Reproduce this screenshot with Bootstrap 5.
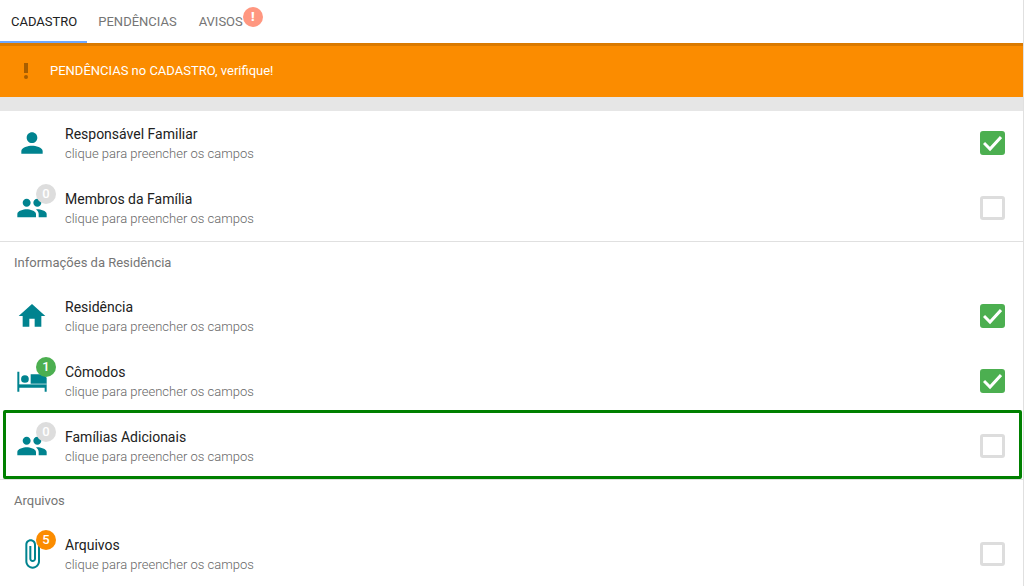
<!DOCTYPE html>
<html lang="pt-BR">
<head>
<meta charset="utf-8">
<meta name="viewport" content="width=device-width, initial-scale=1">
<title>Cadastro</title>
<link href="https://cdn.jsdelivr.net/npm/bootstrap@5.3.0/dist/css/bootstrap.min.css" rel="stylesheet">
<style>
  body { font-family: Roboto, "Liberation Sans", sans-serif; font-size: 13px; color: #212121; background: #fff; }
  .page { border-right: 1px solid #e0e0e0; }
  .tabs .nav-link { height: 43px; line-height: 20px; padding: 12px 11px 0; color: #757575; font-weight: 400; border-radius: 0; font-size: 13px; }
  .tabs .nav-link.active { color: #212121; border-bottom: 2px solid #6ea8fe; padding-right: 10px; }
  .count { width: 20px; height: 20px; line-height: 20px; border-radius: 50%; color: #fff; font-size: 13px; font-weight: 500; text-align: center; position: absolute; }
  .tabs .count { top: 7px; right: -9px; background: #ff9780; font-weight: 900; }
  .notice { height: 54px; background: #fb8c00; border-top: 3px solid #da7a00; padding-bottom: 2px; color: #fff; font-weight: 400; }
  .notice svg { width: 50px; height: 16px; }
  .spacer { height: 14px; background: #e6e6e6; }
  .entry { height: 65px; }
  .pic { width: 32px; height: 32px; margin: 0 17px 2px 16px; fill: #00838f; }
  .pic svg { width: 32px; height: 32px; display: block; }
  .pic .count { top: -8px; left: 20px; }
  .none { background: #ddd; }
  .done { background: #4caf50; }
  .some { background: #fb8c00; }
  .caption { font-size: 14px; line-height: 20px; }
  .hint { line-height: 20px; color: #666; font-weight: 300; }
  .tick { appearance: none; width: 25px; height: 24px; margin: 0 18px 2px 0; border: 3px solid #ddd; border-radius: 3px; background: #fff; }
  .tick:checked { border-color: #4caf50; background: #4caf50 url("data:image/svg+xml,%3Csvg xmlns='http://www.w3.org/2000/svg' viewBox='0 0 19 18'%3E%3Cpath d='M1 9l6 6L18 3' fill='none' stroke='%23fff' stroke-width='3'/%3E%3C/svg%3E") center / 19px 18px no-repeat; }
  .group { border-top: 1px solid #e0e0e0; }
  .group-title { height: 42px; padding-left: 14px; color: #757575; font-size: 13px; font-weight: 400; margin: 0; }
  .outlined::after { content: ""; position: absolute; inset: -4px 1px 0 3px; border: 3px solid #008000; border-radius: 2px; pointer-events: none; }
</style>
</head>
<body>
<svg class="d-none">
  <symbol id="person" viewBox="0 0 24 24"><path d="M12 12c2.200 0 4-1.800 4-4s-1.800-4-4-4-4 1.800-4 4 1.800 4 4 4zm0 2c-2.700 0-8 1.300-8 4v2h16v-2c0-2.700-5.300-4-8-4z"/></symbol>
  <symbol id="people" viewBox="0 0 24 24"><path d="M16 11c1.660 0 2.990-1.340 2.990-3S17.660 5 16 5s-3 1.340-3 3 1.340 3 3 3zm-8 0c1.660 0 2.990-1.340 2.990-3S9.660 5 8 5 5 6.340 5 8s1.340 3 3 3zm0 2c-2.330 0-7 1.170-7 3.500V19h14v-2.500C15 14.170 10.330 13 8 13zm8 0c-.29 0-.62.02-.97.05 1.160.84 1.970 1.970 1.970 3.450V19h6v-2.500c0-2.330-4.670-3.500-7-3.500z"/></symbol>
  <symbol id="home" viewBox="0 0 24 24"><path d="M10 20v-6h4v6h5v-8h3L12 3 2 12h3v8z"/></symbol>
  <symbol id="bed" viewBox="0 0 24 24"><path d="M1 5h1.500v9.300H11V7h9.500L23 9.500V20h-1.500v-3h-19v3H1z"/><circle cx="6.700" cy="10.500" r="2.900"/><path d="M2.500 14.300H23" stroke="#fff" stroke-width=".5"/></symbol>
  <symbol id="clip" viewBox="0 0 24 24"><path d="M16.500 6v11.500c0 2.210-1.790 4-4 4s-4-1.790-4-4V5c0-1.380 1.120-2.500 2.500-2.500s2.500 1.120 2.500 2.500v10.500c0 .55-.45 1-1 1s-1-.45-1-1V6H10v9.500c0 1.380 1.120 2.500 2.500 2.500s2.500-1.120 2.500-2.500V5c0-2.210-1.790-4-4-4S7 2.790 7 5v12.500c0 3.040 2.460 5.500 5.500 5.500s5.500-2.460 5.500-5.500V6h-1.500z"/></symbol>
</svg>
<div class="page">
  <nav class="nav tabs">
    <a class="nav-link active" href="#">CADASTRO</a>
    <a class="nav-link" href="#">PENDÊNCIAS</a>
    <a class="nav-link position-relative" href="#">AVISOS<span class="count">!</span></a>
  </nav>
  <div class="notice d-flex align-items-center" role="alert">
    <svg viewBox="0 0 50 16" fill="#a85e00"><path d="M24 0h4v10h-4z"/><circle cx="26" cy="14" r="2"/></svg>
    <span>PENDÊNCIAS no CADASTRO, verifique!</span>
  </div>
  <div class="spacer"></div>
  <main>
    <section>
      <div class="entry d-flex align-items-center">
        <div class="pic"><svg><use href="#person"/></svg></div>
        <label class="flex-grow-1" for="responsavel"><span class="caption d-block">Responsável Familiar</span><span class="hint d-block">clique para preencher os campos</span></label>
        <input class="tick" type="checkbox" id="responsavel" checked>
      </div>
      <div class="entry d-flex align-items-center">
        <div class="pic position-relative"><svg><use href="#people"/></svg><span class="count none">0</span></div>
        <label class="flex-grow-1" for="membros"><span class="caption d-block">Membros da Família</span><span class="hint d-block">clique para preencher os campos</span></label>
        <input class="tick" type="checkbox" id="membros">
      </div>
    </section>
    <section class="group">
      <h2 class="group-title d-flex align-items-center">Informações da Residência</h2>
      <div class="entry d-flex align-items-center">
        <div class="pic"><svg><use href="#home"/></svg></div>
        <label class="flex-grow-1" for="residencia"><span class="caption d-block">Residência</span><span class="hint d-block">clique para preencher os campos</span></label>
        <input class="tick" type="checkbox" id="residencia" checked>
      </div>
      <div class="entry d-flex align-items-center">
        <div class="pic position-relative"><svg><use href="#bed"/></svg><span class="count done">1</span></div>
        <label class="flex-grow-1" for="comodos"><span class="caption d-block">Cômodos</span><span class="hint d-block">clique para preencher os campos</span></label>
        <input class="tick" type="checkbox" id="comodos" checked>
      </div>
      <div class="entry outlined position-relative d-flex align-items-center">
        <div class="pic position-relative"><svg><use href="#people"/></svg><span class="count none">0</span></div>
        <label class="flex-grow-1" for="familias"><span class="caption d-block">Famílias Adicionais</span><span class="hint d-block">clique para preencher os campos</span></label>
        <input class="tick" type="checkbox" id="familias">
      </div>
    </section>
    <section class="group">
      <h2 class="group-title d-flex align-items-center">Arquivos</h2>
      <div class="entry d-flex align-items-center">
        <div class="pic position-relative"><svg><use href="#clip"/></svg><span class="count some">5</span></div>
        <label class="flex-grow-1" for="arquivos"><span class="caption d-block">Arquivos</span><span class="hint d-block">clique para preencher os campos</span></label>
        <input class="tick" type="checkbox" id="arquivos">
      </div>
    </section>
  </main>
</div>
<script src="https://cdn.jsdelivr.net/npm/bootstrap@5.3.0/dist/js/bootstrap.bundle.min.js"></script>
</body>
</html>
